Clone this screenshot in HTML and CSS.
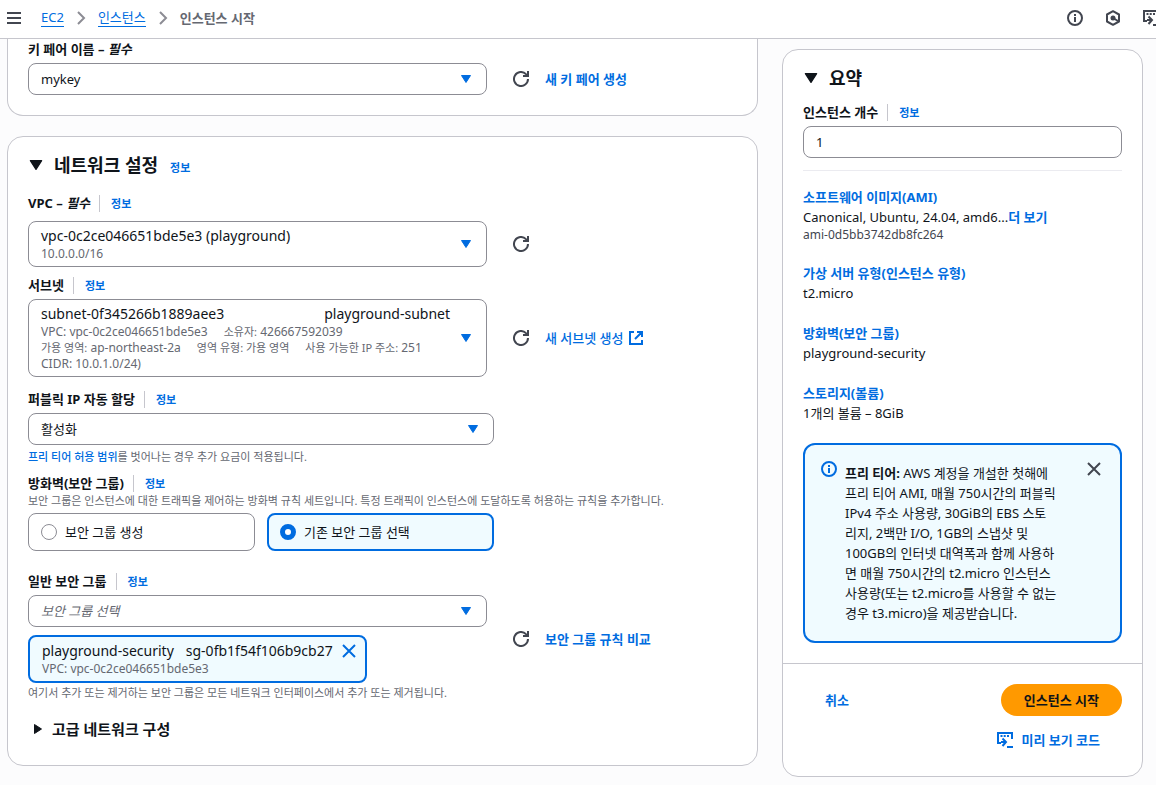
FILE: index.html
```html
<!DOCTYPE html>
<html lang="ko">
<head>
<meta charset="utf-8">
<meta name="viewport" content="width=device-width, initial-scale=1">
<title>인스턴스 시작 | EC2</title>
<link rel="stylesheet" href="styles.css">
</head>
<body>
<svg class="defs" aria-hidden="true">
  <symbol id="i-caret" viewBox="0 0 16 16"><path d="M3.500 4.500h9L8 11.500z" fill="currentColor" stroke="currentColor" stroke-width="1" stroke-linejoin="round"/></symbol>
  <symbol id="i-refresh" viewBox="0 0 16 16"><path d="M15 8a7 7 0 1 1-2-4.900L15 5M15 0v5h-5" fill="none" stroke="currentColor" stroke-width="2"/></symbol>
  <symbol id="i-info" viewBox="0 0 16 16"><circle cx="8" cy="8" r="7" fill="none" stroke="currentColor" stroke-width="2"/><path d="M8 7v5M8 4v2" fill="none" stroke="currentColor" stroke-width="2"/></symbol>
  <symbol id="i-close" viewBox="0 0 16 16"><path d="M2 2l12 12M14 2L2 14" fill="none" stroke="currentColor" stroke-width="2"/></symbol>
  <symbol id="i-code" viewBox="0 0 16 16"><path d="M4 11H1V1h14v6M4 10h5M5.500 6.500L9 10l-3.500 4M10 15h6" fill="none" stroke="currentColor" stroke-width="2"/><path d="M3.500 3h2v2h-2zM6.700 3h2v2h-2zM10 3h2v2h-2z" fill="currentColor"/></symbol>
  <symbol id="i-external" viewBox="0 0 16 16"><path d="M6 2H2v12h12v-4M9 2h5v5M14 2L7 9" fill="none" stroke="currentColor" stroke-width="2"/></symbol>
  <symbol id="i-hex" viewBox="0 0 16 16"><path d="M8 1.200l6 3.300v7L8 14.800 2 11.500v-7z" fill="none" stroke="currentColor" stroke-width="2" stroke-linejoin="round"/><circle cx="8" cy="8" r="2.500" fill="currentColor"/><path d="M8 8l5 3" stroke="currentColor" stroke-width="2"/></symbol>
  <symbol id="i-chevron" viewBox="0 0 16 16"><path d="M5 2l6 6-6 6" fill="none" stroke="currentColor" stroke-width="2"/></symbol>
  <symbol id="i-menu" viewBox="0 0 16 16"><path d="M1 3h14M1 8h14M1 13h14" stroke="currentColor" stroke-width="2"/></symbol>
</svg>

<header class="topbar">
  <button class="icon-btn" type="button" aria-label="메뉴"><svg class="icon"><use href="#i-menu"/></svg></button>
  <nav class="crumbs" aria-label="탐색 경로">
    <a class="crumb" href="#ec2">EC2</a>
    <svg class="icon sep"><use href="#i-chevron"/></svg>
    <a class="crumb" href="#instances">인스턴스</a>
    <svg class="icon sep"><use href="#i-chevron"/></svg>
    <span class="crumb-current">인스턴스 시작</span>
  </nav>
  <div class="tools">
    <button class="icon-btn" type="button" aria-label="정보"><svg class="icon"><use href="#i-info"/></svg></button>
    <button class="icon-btn" type="button" aria-label="설정"><svg class="icon"><use href="#i-hex"/></svg></button>
    <button class="icon-btn" type="button" aria-label="코드"><svg class="icon"><use href="#i-code"/></svg></button>
  </div>
</header>

<main class="layout">
  <div class="sections">
    <section class="card card-top">
      <div class="label-row"><label for="key">키 페어 이름 – <em>필수</em></label></div>
      <div class="row">
        <div class="control"><div class="select">
          <select id="key"><option>mykey</option></select><svg class="icon caret"><use href="#i-caret"/></svg>
        </div></div>
        <button class="icon-btn" type="button" aria-label="새로 고침"><svg class="icon"><use href="#i-refresh"/></svg></button>
        <a class="action" href="#new-key">새 키 페어 생성</a>
      </div>
    </section>

    <section class="card card-network">
      <div class="title-row">
        <button class="icon-btn title-caret" type="button" aria-label="접기"><svg class="icon icon-lg"><use href="#i-caret"/></svg></button>
        <h2 class="title">네트워크 설정</h2>
        <a class="info" href="#info">정보</a>
      </div>

      <div class="field field-vpc">
        <div class="label-row"><span id="l-vpc">VPC – <em>필수</em></span><a class="info divided" href="#info">정보</a></div>
        <div class="row">
          <div class="control">
            <button class="rich" type="button" aria-labelledby="l-vpc">
              <span class="rich-text">
                <span class="rich-main">vpc-0c2ce046651bde5e3 (playground)</span>
                <span class="meta">10.0.0.0/16</span>
              </span>
              <svg class="icon caret"><use href="#i-caret"/></svg>
            </button>
          </div>
          <button class="icon-btn" type="button" aria-label="새로 고침"><svg class="icon"><use href="#i-refresh"/></svg></button>
        </div>
      </div>

      <div class="field field-subnet">
        <div class="label-row"><span id="l-subnet">서브넷</span><a class="info divided" href="#info">정보</a></div>
        <div class="row">
          <div class="control">
            <button class="rich" type="button" aria-labelledby="l-subnet">
              <span class="rich-text">
                <span class="rich-main"><span>subnet-0f345266b1889aee3</span><span>playground-subnet</span></span>
                <span class="meta"><span>VPC: vpc-0c2ce046651bde5e3</span><span><small>소유자:</small> 426667592039</span></span>
                <span class="meta"><span><small>가용 영역:</small> ap-northeast-2a</span><span><small>영역 유형: 가용 영역</small></span><span><small>사용 가능한 IP 주소:</small> 251</span></span>
                <span class="meta">CIDR: 10.0.1.0/24)</span>
              </span>
              <svg class="icon caret"><use href="#i-caret"/></svg>
            </button>
          </div>
          <button class="icon-btn" type="button" aria-label="새로 고침"><svg class="icon"><use href="#i-refresh"/></svg></button>
          <a class="action action-plain" href="#new-subnet">새 서브넷 생성<svg class="icon"><use href="#i-external"/></svg></a>
        </div>
      </div>

      <div class="field field-ip">
        <div class="label-row"><label for="ip">퍼블릭 IP 자동 할당</label><a class="info divided" href="#info">정보</a></div>
        <div class="select wide">
          <select id="ip"><option>활성화</option></select><svg class="icon caret"><use href="#i-caret"/></svg>
        </div>
        <p class="hint hint-ip"><a href="#free">프리 티어 허용 범위</a>를 벗어나는 경우 추가 요금이 적용됩니다.</p>
      </div>

      <fieldset class="field field-firewall">
        <legend class="label-row"><span>방화벽(보안 그룹)</span><a class="info divided" href="#info">정보</a></legend>
        <p class="hint">보안 그룹은 인스턴스에 대한 트래픽을 제어하는 방화벽 규칙 세트입니다. 특정 트래픽이 인스턴스에 도달하도록 허용하는 규칙을 추가합니다.</p>
        <div class="tiles wide">
          <label class="tile"><input type="radio" name="sg">보안 그룹 생성</label>
          <label class="tile tile-on"><input type="radio" name="sg" checked>기존 보안 그룹 선택</label>
        </div>
      </fieldset>

      <div class="field">
        <div class="label-row"><label for="common">일반 보안 그룹</label><a class="info divided" href="#info">정보</a></div>
        <div class="row">
          <div class="control">
            <div class="select">
              <select id="common" class="placeholder"><option>보안 그룹 선택</option></select><svg class="icon caret"><use href="#i-caret"/></svg>
            </div>
            <div class="token">
              <div>
                <div class="token-main"><span>playground-security</span><span>sg-0fb1f54f106b9cb27</span></div>
                <div class="meta">VPC: vpc-0c2ce046651bde5e3</div>
              </div>
              <button class="icon-btn token-x" type="button" aria-label="제거"><svg class="icon"><use href="#i-close"/></svg></button>
            </div>
          </div>
          <button class="icon-btn" type="button" aria-label="새로 고침"><svg class="icon"><use href="#i-refresh"/></svg></button>
          <a class="action" href="#compare">보안 그룹 규칙 비교</a>
        </div>
        <p class="hint hint-sg">여기서 추가 또는 제거하는 보안 그룹은 모든 네트워크 인터페이스에서 추가 또는 제거됩니다.</p>
      </div>

      <button class="expander" type="button" aria-expanded="false"><svg class="icon"><use href="#i-caret"/></svg>고급 네트워크 구성</button>
    </section>
  </div>

  <aside class="card card-summary">
    <div class="summary-body">
      <div class="title-row">
        <button class="icon-btn title-caret" type="button" aria-label="접기"><svg class="icon icon-lg"><use href="#i-caret"/></svg></button>
        <h2 class="title">요약</h2>
      </div>
      <div class="label-row"><label for="count">인스턴스 개수</label><a class="info divided" href="#info">정보</a></div>
      <input class="text-input" id="count" type="text" inputmode="numeric" value="1">
      <hr class="rule">
      <dl class="facts">
        <div><dt><a href="#ami">소프트웨어 이미지(AMI)</a></dt><dd>Canonical, Ubuntu, 24.04, amd6...<a class="more" href="#more">더 보기</a></dd><dd class="meta meta-dark">ami-0d5bb3742db8fc264</dd></div>
        <div><dt><a href="#type">가상 서버 유형(인스턴스 유형)</a></dt><dd>t2.micro</dd></div>
        <div><dt><a href="#firewall">방화벽(보안 그룹)</a></dt><dd>playground-security</dd></div>
        <div><dt><a href="#storage">스토리지(볼륨)</a></dt><dd>1개의 볼륨 – 8GiB</dd></div>
      </dl>
      <div class="alert">
        <svg class="icon alert-icon"><use href="#i-info"/></svg>
        <p class="alert-text"><strong>프리 티어:</strong> AWS 계정을 개설한 첫해에<br>프리 티어 AMI, 매월 750시간의 퍼블릭<br>IPv4 주소 사용량, 30GiB의 EBS 스토<br>리지, 2백만 I/O, 1GB의 스냅샷 및<br>100GB의 인터넷 대역폭과 함께 사용하<br>면 매월 750시간의 t2.micro 인스턴스<br>사용량(또는 t2.micro를 사용할 수 없는<br>경우 t3.micro)을 제공받습니다.</p>
        <button class="icon-btn" type="button" aria-label="닫기"><svg class="icon"><use href="#i-close"/></svg></button>
      </div>
    </div>
    <div class="summary-foot">
      <button class="btn btn-link" type="button">취소</button>
      <button class="btn btn-primary" type="button">인스턴스 시작</button>
      <button class="btn btn-link btn-code" type="button"><svg class="icon"><use href="#i-code"/></svg>미리 보기 코드</button>
    </div>
  </aside>
</main>
</body>
</html>
```
FILE: styles.css
```css
:root {
  --text: #0f141a;
  --muted: #656871;
  --icon: #424650;
  --blue: #006ce0;
  --line: #c6c6cd;
  --input-line: #8c8c94;
  --tint: #f0fbff;
}

* { box-sizing: border-box; }

body {
  margin: 0;
  min-height: 100vh;
  background: #fcfcfd;
  color: var(--text);
  font: 13px/20px "Noto Sans", "Noto Sans CJK KR", sans-serif;
  overflow-x: hidden;
}

button, input, select { font: inherit; color: inherit; }
a { color: var(--blue); text-decoration: none; }
p, h2, dl, dd { margin: 0; }
.defs { position: absolute; width: 0; height: 0; }
.icon { display: block; width: 16px; height: 16px; flex: none; }
.icon-lg { width: 20px; height: 20px; }
.icon-btn { display: flex; flex: none; padding: 0; border: 0; background: none; color: var(--icon); cursor: pointer; }

/* Top bar */
.topbar {
  display: flex;
  align-items: center;
  height: 39px;
  padding: 0 0 3px 6px;
  border-bottom: 1px solid var(--line);
  background: #fff;
  overflow: hidden;
}
.crumbs { display: flex; align-items: center; gap: 9px; margin-left: 19px; }
.crumb { border-bottom: 1px solid var(--blue); line-height: 18px; }
.sep { color: var(--input-line); }
.crumb-current { color: var(--muted); font-weight: 700; }
.tools { display: flex; gap: 22px; margin: 0 -3px 0 auto; }

/* Page grid */
.layout {
  display: grid;
  grid-template-columns: minmax(0, 1fr) 361px;
  gap: 24px;
  align-items: start;
  padding: 0 13px 8px 7px;
}
.card { border: 1px solid var(--line); border-radius: 16px; background: #fff; }
.card-top { padding: 0 20px 20px; border-top: 0; border-radius: 0 0 16px 16px; }
.card-network { margin-top: 20px; padding: 16px 20px 26px; }

.title-row { display: flex; align-items: center; height: 24px; }
.title-caret { margin: 0 8px 0 -2px; color: var(--text); }
.title { font-size: 18px; line-height: 24px; }
.info { font-size: 11px; font-weight: 700; }
.title-row .info { margin: 6px 0 0 12px; }

/* Fields */
.label-row { display: flex; align-items: center; height: 20px; margin-bottom: 4px; padding: 0; font-weight: 700; }
.divided { margin-left: 9px; padding: 1px 0 0 11px; border-left: 1px solid var(--line); line-height: 16px; }
.row { display: flex; align-items: center; }
.row > .icon-btn { margin-left: 26px; }
.control { flex: 0 1 459px; min-width: 0; }
.wide { max-width: 466px; }
.field { margin: 0; padding: 0; border: 0; min-width: 0; }
.field-vpc { margin: 16px 0 8px; }
.field-vpc .label-row { margin-bottom: 8px; }
.field-subnet { margin-bottom: 12px; }
.field-ip { margin-bottom: 8px; }
.field-firewall { margin-bottom: 20px; }
.field-firewall .label-row { margin-bottom: 0; }

.select { display: grid; align-items: center; }
.select > * { grid-area: 1 / 1; }
.select select {
  width: 100%;
  height: 32px;
  padding: 0 32px 0 12px;
  border: 1px solid var(--input-line);
  border-radius: 8px;
  background: #fff;
  appearance: none;
}
.select .placeholder { color: var(--muted); font-style: italic; }
.caret { color: var(--blue); pointer-events: none; }
.select .caret { justify-self: end; margin-right: 13px; }

.rich {
  display: flex;
  align-items: center;
  width: 100%;
  padding: 4px 12px;
  border: 1px solid var(--input-line);
  border-radius: 8px;
  background: #fff;
  text-align: left;
}
.rich-text { flex: 1; min-width: 0; padding-right: 8px; }
.rich-main { display: flex; justify-content: space-between; font-size: 14px; }
.meta { display: flex; gap: 16px; color: var(--muted); font-size: 12px; line-height: 16px; white-space: nowrap; }
.meta small { font-size: 11px; }
.meta-dark { color: var(--icon); }

.action { margin-left: 16px; font-weight: 700; }
.action-plain { display: flex; align-items: center; gap: 4px; font-weight: 500; }

.hint { color: var(--muted); font-size: 11px; line-height: 16px; }
.hint-ip { margin-top: 4px; }
.hint-ip a { font-weight: 500; }
.hint-sg { margin-top: 2px; }

.tiles { display: grid; grid-template-columns: 1fr 1fr; gap: 12px; margin-top: 4px; }
.tile {
  display: flex;
  align-items: center;
  gap: 8px;
  height: 38px;
  padding: 0 12px;
  border: 1px solid var(--input-line);
  border-radius: 8px;
}
.tile-on { padding: 0 11px; border: 2px solid var(--blue); background: var(--tint); }
.tile input {
  width: 16px;
  height: 16px;
  margin: 0;
  border: 1px solid var(--input-line);
  border-radius: 50%;
  background: #fff;
  appearance: none;
}
.tile input:checked { border: 5px solid var(--blue); }

.token {
  display: flex;
  align-items: flex-start;
  gap: 8px;
  width: fit-content;
  margin-top: 8px;
  padding: 4px 8px 4px 12px;
  border: 2px solid var(--blue);
  border-radius: 8px;
  background: var(--tint);
}
.token-main { display: flex; gap: 12px; font-size: 14px; }
.token-x { padding-top: 2px; color: var(--blue); }

.expander {
  display: flex;
  align-items: center;
  gap: 6px;
  margin-top: 18px;
  padding: 0 0 0 2px;
  border: 0;
  background: none;
  font-size: 15px;
  font-weight: 700;
}
.expander .icon { transform: rotate(-90deg); }

/* Summary */
.card-summary { margin-top: 10px; }
.summary-body { padding: 16px 20px 20px; }
.summary-body .label-row { margin-top: 12px; }
.text-input {
  display: block;
  width: 100%;
  height: 32px;
  padding: 0 12px;
  border: 1px solid var(--input-line);
  border-radius: 8px;
  background: #fff;
}
.rule { margin: 12px 0 16px; border: 0; border-top: 1px solid #ebebf0; }
.facts { display: grid; gap: 20px; margin-bottom: 20px; }
.facts dt, .more { font-weight: 700; }

.alert {
  display: flex;
  align-items: flex-start;
  padding: 16px 18px 18px 16px;
  border: 2px solid var(--blue);
  border-radius: 12px;
  background: var(--tint);
}
.alert-icon { color: var(--blue); }
.alert-text { flex: 1; padding: 2px 16px 0 8px; }

.summary-foot {
  display: grid;
  grid-template-columns: 1fr auto;
  gap: 8px;
  padding: 20px;
  border-top: 1px solid var(--line);
}
.btn { display: flex; align-items: center; gap: 8px; height: 32px; padding: 0 22px; border: 0; border-radius: 16px; font-weight: 700; }
.btn-primary { padding: 0 23px; background: #ff9900; }
.btn-link { justify-self: start; background: none; color: var(--blue); }
.btn-code { grid-column: 1 / -1; justify-self: end; }
```
